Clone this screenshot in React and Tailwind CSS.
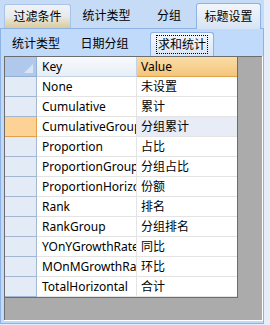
import React from "react";

const rows = [
  ["None", "未设置"],
  ["Cumulative", "累计"],
  ["CumulativeGroup", "分组累计"],
  ["Proportion", "占比"],
  ["ProportionGroup", "分组占比"],
  ["ProportionHorizontal", "份额"],
  ["Rank", "排名"],
  ["RankGroup", "分组排名"],
  ["YOnYGrowthRate", "同比"],
  ["MOnMGrowthRate", "环比"],
  ["TotalHorizontal", "合计"],
];

const SELECTED = 2;

export default function App() {
  return (
    <div className="w-[270px] h-[325px] bg-[#E6EEF9] font-[family-name:'Noto_Sans','Noto_Sans_CJK_SC',sans-serif] text-[12px] text-black overflow-hidden">
      {/* Outer tab control */}
      <div className="w-[264px] h-[324px] flex flex-col bg-[#C6DBF6]">
        {/* Top tab strip */}
        <div className="h-[28px] flex items-end pl-[4px] relative z-10">
          <div className="w-[67px] h-[24px] flex items-center justify-center rounded-t-[3px] border border-b-0 border-[#A9C4EA] bg-gradient-to-b from-[#EFF4FB] via-[#E8EAEA] to-[#DCCA98]">
            过滤条件
          </div>
          <div className="w-[71px] h-[24px] flex items-center justify-center">统计类型</div>
          <div className="w-[54px] h-[24px] flex items-center justify-center">分组</div>
          <div className="w-[65px] h-[26px] -mb-px flex items-center justify-center rounded-t-[3px] border border-b-0 border-[#8DB2E3] bg-gradient-to-b from-[#F2F6FC] to-[#D7E4F5]">
            标题设置
          </div>
        </div>

        {/* Outer panel */}
        <div className="flex-1 border border-[#8DB2E3] bg-[#BFDAFB] flex flex-col">
          {/* Inner tab strip */}
          <div className="h-[26px] flex items-end pl-[3px] relative z-10">
            <div className="w-[64px] h-[22px] flex items-center justify-center">统计类型</div>
            <div className="w-[73px] h-[22px] flex items-center justify-center">日期分组</div>
            <div className="ml-[9px] w-[64px] h-[24px] -mb-px flex items-center justify-center rounded-t-[3px] border border-b-0 border-[#8DB2E3] bg-gradient-to-b from-[#F3F7FC] to-[#D9E6F6]">
              <span className="border border-dotted border-black px-[1px] h-[19px] flex items-center">求和统计</span>
            </div>
          </div>

          {/* Inner panel */}
          <div className="flex-1 pl-[3px] pt-[1px] flex">
            <div className="w-[259px] h-[265px] border-r border-b border-white">
              {/* Grid */}
              <div className="w-full h-full bg-[#ABABAB] border-l border-t border-[#6D6D6D]">
                <div className="w-[233px] border-r border-b border-[#6D6D6D] bg-white">
                  {/* Header */}
                  <div className="flex h-[20px]">
                    <div className="w-[32px] bg-[#AFC8EC] border-r border-b border-[#94AFD4] relative">
                      <div className="absolute right-[3px] bottom-[3px] w-0 h-0 border-l-[9px] border-l-transparent border-b-[9px] border-b-[#D9E5F4]" />
                    </div>
                    <div className="w-[100px] bg-gradient-to-b from-[#F8FAFD] to-[#E7EEF7] border-r border-b border-[#C5D3E5] pl-[5px] flex items-center">
                      Key
                    </div>
                    <div className="w-[100px] bg-gradient-to-b from-[#FADDA6] to-[#F3C57C] border-b border-[#E3A24A] pl-[4px] flex items-center">
                      Value
                    </div>
                  </div>
                  {rows.map(([k, v], i) => (
                    <div key={k} className="flex h-[20px]">
                      <div
                        className={
                          i === SELECTED
                            ? "w-[32px] bg-[#FCD394] border-r border-b border-[#E3A24A]"
                            : "w-[32px] bg-[#E3EBF7] border-r border-b border-[#A3B7D1]"
                        }
                      />
                      <div className="w-[100px] border-r border-b border-[#E4E4E4] pl-[5px] flex items-center overflow-hidden whitespace-nowrap">
                        {k}
                      </div>
                      <div
                        className={
                          i === SELECTED
                            ? "w-[100px] bg-[#E8ECF6] border-b border-[#E4E4E4] pl-[4px] flex items-center"
                            : "w-[100px] border-b border-[#E4E4E4] pl-[4px] flex items-center"
                        }
                      >
                        {v}
                      </div>
                    </div>
                  ))}
                </div>
              </div>
            </div>
          </div>
        </div>
      </div>
    </div>
  );
}
